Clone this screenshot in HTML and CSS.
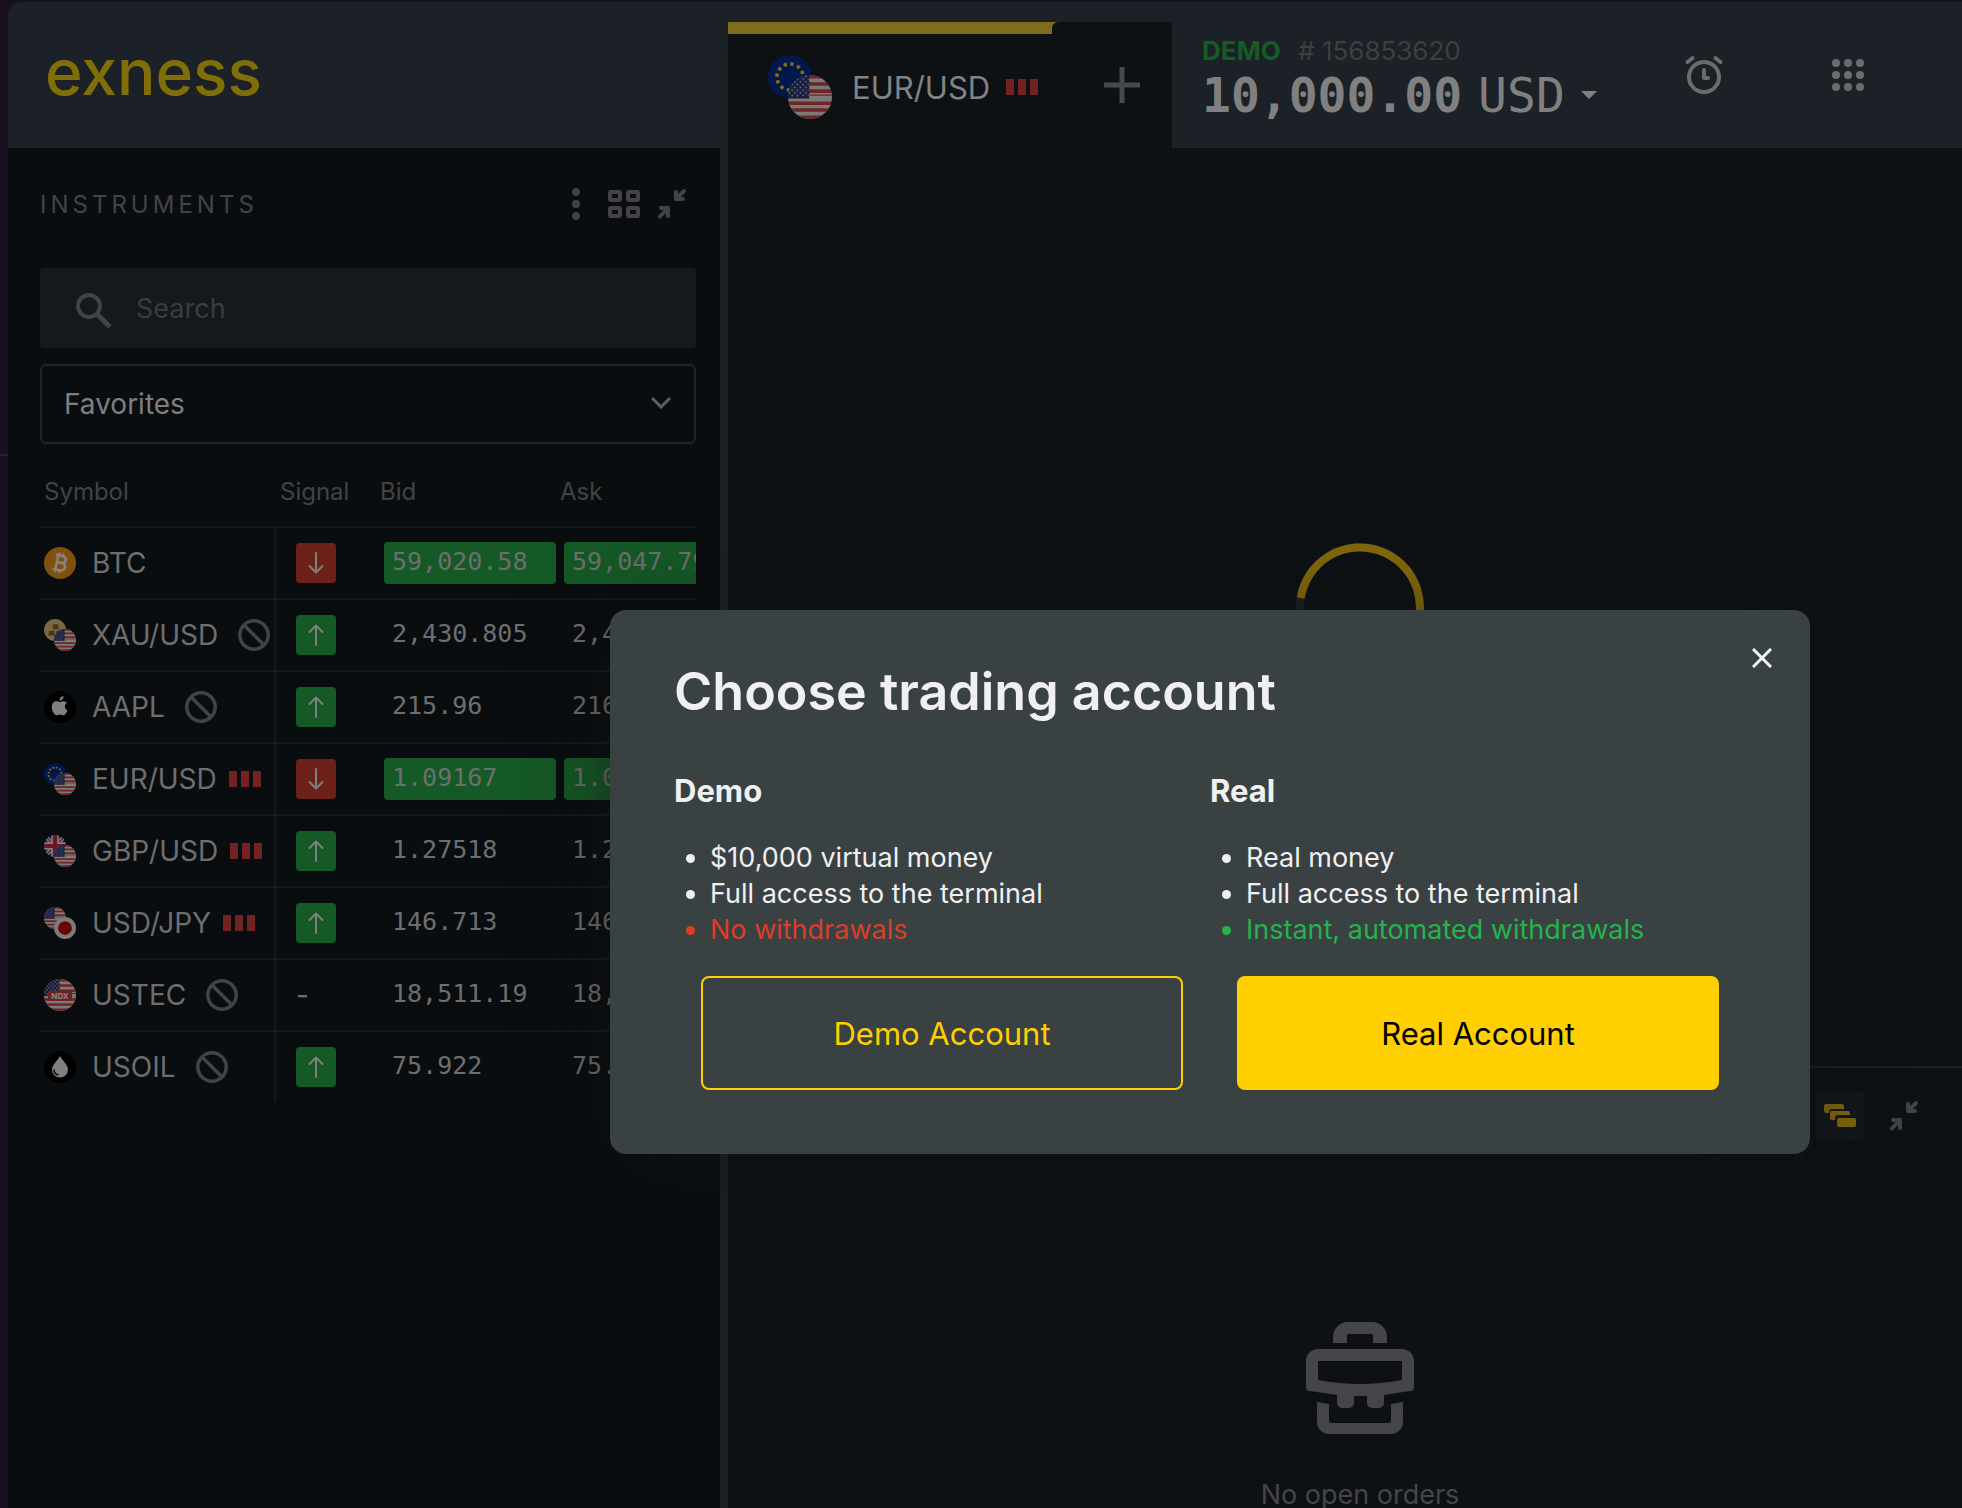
FILE: index.html
```html
<!DOCTYPE html>
<html lang="en">
<head>
    <meta charset="UTF-8">
    <meta name="viewport" content="width=device-width, initial-scale=1.0">
    <title>Exness Terminal</title>
    <link rel="stylesheet" href="styles.css">
</head>
<body>
    <!-- Shared icons -->
    <svg class="sprite" aria-hidden="true">
        <defs>
            <clipPath id="round"><circle cx="16" cy="16" r="16"/></clipPath>
            <pattern id="stars" width="4" height="4" patternUnits="userSpaceOnUse">
                <circle cx="1" cy="1" r=".7" fill="#75757c"/>
                <circle cx="3" cy="3" r=".7" fill="#75757c"/>
            </pattern>
        </defs>
        <symbol id="us" viewBox="0 0 32 32">
            <g clip-path="url(#round)">
                <path fill="#7d7976" d="M0 0h32v32H0z"/>
                <path stroke="#6e2527" stroke-width="2.6" d="M0 1.3h32M0 6.5h32M0 11.7h32M0 20.5h32M0 25.5h32M0 30.7h32"/>
                <path stroke="#6e2527" d="M16 14.6h16"/>
                <path fill="#141c3d" d="M0 0h15.500v17H0z"/>
                <path fill="url(#stars)" d="M0 0h15v16H0z"/>
            </g>
        </symbol>
        <symbol id="eu" viewBox="0 0 32 32">
            <circle cx="16" cy="16" r="16" fill="#02174d"/>
            <circle cx="16" cy="16" r="9.500" fill="none" stroke="#80700f" stroke-width="2.600" stroke-dasharray="2.400 2.574"/>
        </symbol>
        <symbol id="gb" viewBox="0 0 32 32">
            <g clip-path="url(#round)">
                <path fill="#0b1c4f" d="M0 0h32v32H0z"/>
                <path stroke="#7d7d80" stroke-width="6" d="M0 0l32 32M32 0L0 32"/>
                <path stroke="#6e1425" stroke-width="2" d="M0 0l32 32M32 0L0 32"/>
                <path stroke="#7d7d80" stroke-width="11" d="M16 0v32M0 16h32"/>
                <path stroke="#6e1425" stroke-width="6" d="M16 0v32M0 16h32"/>
            </g>
        </symbol>
        <symbol id="jp" viewBox="0 0 32 32">
            <circle cx="16" cy="16" r="16" fill="#7b7b7b"/>
            <circle cx="16" cy="16" r="10" fill="#6b0503"/>
        </symbol>
        <symbol id="gold" viewBox="0 0 32 32">
            <circle cx="16" cy="16" r="16" fill="#786844"/>
            <path fill="#4c3710" d="M13 7.500h7l2 7.500h-9zM8 17h7l1 7H6zM18 17h6l2 7h-8z"/>
        </symbol>
        <symbol id="pair-eurusd" viewBox="0 0 32 32">
            <use href="#eu" width="22" height="22"/>
            <use href="#us" x="10" y="10" width="22" height="22"/>
        </symbol>
        <symbol id="pair-gbpusd" viewBox="0 0 32 32">
            <use href="#gb" width="22" height="22"/>
            <use href="#us" x="10" y="10" width="22" height="22"/>
        </symbol>
        <symbol id="pair-usdjpy" viewBox="0 0 32 32">
            <use href="#us" width="22" height="22"/>
            <use href="#jp" x="10" y="10" width="22" height="22"/>
        </symbol>
        <symbol id="pair-xauusd" viewBox="0 0 32 32">
            <use href="#gold" width="22" height="22"/>
            <use href="#us" x="10" y="10" width="22" height="22"/>
        </symbol>
        <symbol id="btc" viewBox="0 0 32 32">
            <circle cx="16" cy="16" r="16" fill="#80500f"/>
            <g transform="rotate(13 16 16)" fill="none" stroke="#888280" stroke-width="2.600">
                <path d="M10 8.800h7.500a3.300 3.300 0 0 1 0 6.800h-4.500M10 23.200h8a3.700 3.700 0 0 0 0-7.600h-4M12.800 8.800v14.400"/>
                <path stroke-width="1.900" d="M13.500 5.800v3M17.300 5.800v3M13.500 23.200v3M17.300 23.200v3"/>
            </g>
        </symbol>
        <symbol id="aapl" viewBox="0 0 32 32">
            <circle cx="16" cy="16" r="16"/>
            <path fill="#808080" d="M19.500 5c.2 2.400-1.600 4.600-4 4.500C15.300 7.400 17.300 5.300 19.500 5zM15.800 11c.8 0 1.900-.9 3.600-.8 1.500 0 2.700.7 3.500 1.800-3 1.900-2.500 6 .6 7.300-.7 2-2.300 5-4.100 5-1.300 0-1.800-.8-3.400-.8s-2.100.8-3.300.8c-2.300 0-4.900-4.500-4.900-8.300 0-3.600 2.200-5.700 4.600-5.700 1.500 0 2.600.7 3.400.7z"/>
        </symbol>
        <symbol id="ndx" viewBox="0 0 32 32">
            <use href="#us" width="32" height="32"/>
            <rect x="4" y="11.500" width="24" height="10.500" rx="2" fill="#6b2328"/>
            <text x="16" y="19.800" class="ndx-text">NDX</text>
        </symbol>
        <symbol id="oil" viewBox="0 0 32 32">
            <circle cx="16" cy="16" r="16"/>
            <path fill="#808080" d="M16 5c2 4 8 9 8 13.500a8 8 0 0 1-16 0C8 14 14 9 16 5z"/>
            <path fill="none" stroke="#000" stroke-width="1.500" d="M10 18.500c0 3 2 5 4.500 5.500"/>
        </symbol>
        <symbol id="closed" viewBox="0 0 32 32">
            <g fill="none" stroke="#434347" stroke-width="3.500"><circle cx="16" cy="16" r="14.200"/><path d="M6 6l20 20"/></g>
        </symbol>
        <symbol id="bars" viewBox="0 0 32 16">
            <path fill="#732121" d="M0 0h8v16H0zM12 0h8v16h-8zM24 0h8v16h-8z"/>
        </symbol>
        <symbol id="down" viewBox="0 0 40 40">
            <path fill="none" stroke="#80807c" stroke-width="2" stroke-linecap="round" stroke-linejoin="round" d="M20 10v19M13.500 23l6.500 6.500 6.500-6.500"/>
        </symbol>
        <symbol id="up" viewBox="0 0 40 40">
            <path fill="none" stroke="#80807c" stroke-width="2" stroke-linecap="round" stroke-linejoin="round" d="M20 30V10.500M13.500 17l6.500-6.500 6.500 6.500"/>
        </symbol>
        <symbol id="minimize" viewBox="0 0 32 32">
            <path fill="none" stroke="#434347" stroke-width="4" stroke-linecap="round" stroke-linejoin="round" d="M20 4v7h7M21 10l7-7M5 20h7v8M11 21l-7 7.500"/>
        </symbol>
    </svg>

    <div class="app">
        <header class="header">
            <div class="brand">exness</div>
            <nav class="tabs">
                <button class="tab">
                    <svg class="tab-coin"><use href="#pair-eurusd"/></svg>
                    EUR/USD
                    <svg class="bars"><use href="#bars"/></svg>
                </button>
                <button class="tab-add" aria-label="Add tab">
                    <svg width="36" height="36" viewBox="0 0 36 36"><path stroke="#47494d" stroke-width="5" d="M18 0v36M0 18h36"/></svg>
                </button>
            </nav>
            <button class="account">
                <span class="account-top"><b>DEMO</b> # 156853620</span>
                <span class="account-balance">
                    <b>10,000.00</b>
                    <span>USD</span>
                    <svg width="16" height="8" viewBox="0 0 16 8"><path fill="#808080" d="M0 0h16L8 8z"/></svg>
                </span>
            </button>
            <div class="header-icons">
                <button aria-label="Alerts">
                    <svg width="40" height="40" viewBox="0 0 40 40" fill="none" stroke="#6a6c6d" stroke-width="4" stroke-linecap="round" stroke-linejoin="round"><circle cx="20" cy="22" r="15"/><path d="M20 15v8h4M3.500 7l5-4M36.500 7l-5-4"/></svg>
                </button>
                <button aria-label="Apps">
                    <svg width="32" height="32" viewBox="0 0 32 32" fill="#6a6c6d"><circle cx="4" cy="4" r="4"/><circle cx="16" cy="4" r="4"/><circle cx="28" cy="4" r="4"/><circle cx="4" cy="16" r="4"/><circle cx="16" cy="16" r="4"/><circle cx="28" cy="16" r="4"/><circle cx="4" cy="28" r="4"/><circle cx="16" cy="28" r="4"/><circle cx="28" cy="28" r="4"/></svg>
                </button>
            </div>
        </header>

        <main class="main">
            <aside class="sidebar">
                <div class="sidebar-head">
                    <h2>INSTRUMENTS</h2>
                    <button aria-label="More">
                        <svg width="8" height="32" viewBox="0 0 8 32" fill="#434347"><circle cx="4" cy="4" r="4"/><circle cx="4" cy="16" r="4"/><circle cx="4" cy="28" r="4"/></svg>
                    </button>
                    <button class="grid-btn" aria-label="Grid view">
                        <svg width="32" height="28" viewBox="0 0 32 28" fill="none" stroke="#434347" stroke-width="4"><rect x="2" y="2" width="10" height="8" rx="1"/><rect x="20" y="2" width="10" height="8" rx="1"/><rect x="2" y="18" width="10" height="8" rx="1"/><rect x="20" y="18" width="10" height="8" rx="1"/></svg>
                    </button>
                    <button aria-label="Minimize">
                        <svg width="32" height="32"><use href="#minimize"/></svg>
                    </button>
                </div>

                <label class="search">
                    <svg width="36" height="36" viewBox="0 0 36 36" fill="none" stroke="#434347" stroke-width="4"><circle cx="13" cy="13" r="11"/><path stroke-width="5" d="M21 21l13 13"/></svg>
                    <input type="text" placeholder="Search" aria-label="Search">
                </label>

                <div class="select">
                    <select aria-label="Instrument group">
                        <option>Favorites</option>
                    </select>
                    <svg width="20" height="12" viewBox="0 0 20 12"><path fill="none" stroke="#5c5e60" stroke-width="3" d="M1 1l9 9 9-9"/></svg>
                </div>

                <div class="table-wrap">
                    <table>
                        <thead>
                            <tr>
                                <th class="col-symbol">Symbol</th>
                                <th class="col-signal">Signal</th>
                                <th class="col-price">Bid</th>
                                <th class="col-price">Ask</th>
                            </tr>
                        </thead>
                        <tbody>
                            <tr>
                                <td><div class="symbol"><svg class="coin"><use href="#btc"/></svg>BTC</div></td>
                                <td><svg class="signal red"><use href="#down"/></svg></td>
                                <td><span class="price green">59,020.58</span></td>
                                <td><span class="price green">59,047.79</span></td>
                            </tr>
                            <tr>
                                <td><div class="symbol"><svg class="coin"><use href="#pair-xauusd"/></svg>XAU/USD<svg class="closed"><use href="#closed"/></svg></div></td>
                                <td><svg class="signal green"><use href="#up"/></svg></td>
                                <td><span class="price">2,430.805</span></td>
                                <td><span class="price">2,431.005</span></td>
                            </tr>
                            <tr>
                                <td><div class="symbol"><svg class="coin"><use href="#aapl"/></svg>AAPL<svg class="closed"><use href="#closed"/></svg></div></td>
                                <td><svg class="signal green"><use href="#up"/></svg></td>
                                <td><span class="price">215.96</span></td>
                                <td><span class="price">216.08</span></td>
                            </tr>
                            <tr>
                                <td><div class="symbol"><svg class="coin"><use href="#pair-eurusd"/></svg>EUR/USD<svg class="bars"><use href="#bars"/></svg></div></td>
                                <td><svg class="signal red"><use href="#down"/></svg></td>
                                <td><span class="price green">1.09167</span></td>
                                <td><span class="price green">1.09177</span></td>
                            </tr>
                            <tr>
                                <td><div class="symbol"><svg class="coin"><use href="#pair-gbpusd"/></svg>GBP/USD<svg class="bars"><use href="#bars"/></svg></div></td>
                                <td><svg class="signal green"><use href="#up"/></svg></td>
                                <td><span class="price">1.27518</span></td>
                                <td><span class="price">1.27530</span></td>
                            </tr>
                            <tr>
                                <td><div class="symbol"><svg class="coin"><use href="#pair-usdjpy"/></svg>USD/JPY<svg class="bars"><use href="#bars"/></svg></div></td>
                                <td><svg class="signal green"><use href="#up"/></svg></td>
                                <td><span class="price">146.713</span></td>
                                <td><span class="price">146.724</span></td>
                            </tr>
                            <tr>
                                <td><div class="symbol"><svg class="coin"><use href="#ndx"/></svg>USTEC<svg class="closed"><use href="#closed"/></svg></div></td>
                                <td><span class="no-signal">-</span></td>
                                <td><span class="price">18,511.19</span></td>
                                <td><span class="price">18,517.04</span></td>
                            </tr>
                            <tr>
                                <td><div class="symbol"><svg class="coin"><use href="#oil"/></svg>USOIL<svg class="closed"><use href="#closed"/></svg></div></td>
                                <td><svg class="signal green"><use href="#up"/></svg></td>
                                <td><span class="price">75.922</span></td>
                                <td><span class="price">75.941</span></td>
                            </tr>
                        </tbody>
                    </table>
                </div>
            </aside>

            <section class="content">
                <div class="chart">
                    <svg width="128" height="128" viewBox="0 0 128 128" fill="none" stroke-width="8">
                        <circle cx="64" cy="64" r="60" stroke="#1c1f21"/>
                        <path stroke="#80690b" d="M4.700 55A60 60 0 1 1 115 96"/>
                    </svg>
                </div>
                <div class="orders">
                    <div class="orders-tools">
                        <button class="group-btn" aria-label="Group orders">
                            <svg width="32" height="24" viewBox="0 0 32 24" fill="#80690b"><path d="M2 0h16a2 2 0 0 1 2 2v3H8a3 3 0 0 0-3 3v1H2a2 2 0 0 1-2-2V2a2 2 0 0 1 2-2z"/><path d="M9 7h15a2 2 0 0 1 2 2v2H14a3 3 0 0 0-3 3v2H8a2 2 0 0 1-2-2V9a2 2 0 0 1 3-2z"/><rect x="13" y="14" width="19" height="9" rx="2"/></svg>
                        </button>
                        <button aria-label="Minimize">
                            <svg width="32" height="32"><use href="#minimize"/></svg>
                        </button>
                    </div>
                    <div class="empty">
                        <svg width="108" height="112" viewBox="0 0 108 112" fill="#454549">
                            <path d="M27 21V15A15 15 0 0 1 42 0h24a15 15 0 0 1 15 15v6H67v-7a2 2 0 0 0-2-2H43a2 2 0 0 0-2 2v7z"/>
                            <path fill-rule="evenodd" d="M12 27h84a12 12 0 0 1 12 12v26a4 4 0 0 1-4 4l-26 4v8a5 5 0 0 1-5 5h-7a5 5 0 0 1-5-5v-7H48v7a5 5 0 0 1-5 5h-7a5 5 0 0 1-5-5v-8L4 69a4 4 0 0 1-4-4V39a12 12 0 0 1 12-12zM12 39v19q42 8 84 0V39z"/>
                            <path d="M11 80l12 2v17a2 2 0 0 0 2 2h58a2 2 0 0 0 2-2V82l12-2v20a12 12 0 0 1-12 12H23a12 12 0 0 1-12-12z"/>
                        </svg>
                        <p>No open orders</p>
                    </div>
                </div>
            </section>
        </main>
    </div>

    <div class="modal" role="dialog" aria-labelledby="modal-title">
        <button class="modal-close" aria-label="Close">
            <svg width="20" height="20" viewBox="0 0 20 20"><path stroke="#f3f4f5" stroke-width="3" d="M1 1l18 18M19 1L1 19"/></svg>
        </button>
        <h1 id="modal-title">Choose trading account</h1>
        <div class="plans">
            <div class="plan">
                <h3>Demo</h3>
                <ul>
                    <li>$10,000 virtual money</li>
                    <li>Full access to the terminal</li>
                    <li class="bad">No withdrawals</li>
                </ul>
                <button class="btn btn-outline">Demo Account</button>
            </div>
            <div class="plan">
                <h3>Real</h3>
                <ul>
                    <li>Real money</li>
                    <li>Full access to the terminal</li>
                    <li class="good">Instant, automated withdrawals</li>
                </ul>
                <button class="btn btn-fill">Real Account</button>
            </div>
        </div>
    </div>
</body>
</html>
```
FILE: styles.css
```css
* {
    box-sizing: border-box;
}
body {
    margin: 0;
    height: 100vh;
    padding: 2px 0 0 8px;
    overflow: hidden;
    font-family: Inter, "Liberation Sans", sans-serif;
    font-size: 28px;
    color: #6e6e6e;
    background: linear-gradient(#222426, #222426) 0 454px / 8px 2px no-repeat #19101f;
}
h1, h2, h3, p, ul {
    margin: 0;
}
button {
    padding: 0;
    border: 0;
    background: none;
    font: inherit;
    color: inherit;
    cursor: pointer;
}
svg {
    display: block;
    flex: none;
}
.sprite {
    position: absolute;
    width: 0;
    height: 0;
}
.ndx-text {
    font-size: 8px;
    font-weight: 700;
    fill: #8a8a8a;
    text-anchor: middle;
}
.app {
    display: flex;
    flex-direction: column;
    height: 100%;
    border-top-left-radius: 14px;
    overflow: hidden;
    background: #0d1114;
}

/* Header */
.header {
    display: flex;
    height: 146px;
    flex: none;
    background: #1c2027;
}
.brand {
    width: 720px;
    padding: 30px 0 0 37px;
    font-size: 64px;
    line-height: 80px;
    font-weight: 500;
    color: #806f09;
}
.tabs {
    display: flex;
    margin-top: 20px;
    background: linear-gradient(#806c1d, #806c1d) 0 0 / 330px 12px no-repeat #0d1114;
}
.tab {
    display: flex;
    align-items: center;
    width: 324px;
    padding: 4px 0 0 40px;
    font-size: 31px;
    color: #838383;
}
.tab-coin {
    width: 64px;
    height: 64px;
    margin-right: 20px;
}
.tab-add {
    display: flex;
    align-items: center;
    justify-content: center;
    width: 120px;
    padding-left: 20px;
    border-top-left-radius: 6px;
    background: #0d1114;
}
.account {
    display: flex;
    flex-direction: column;
    margin-left: 30px;
    padding-top: 33px;
    text-align: left;
}
.account-top {
    font-size: 26px;
    line-height: 32px;
    color: #3f3f40;
}
.account-top b {
    margin-right: 10px;
    color: #145b26;
}
.account-balance {
    display: flex;
    align-items: center;
    font-family: "DejaVu Sans Mono", monospace;
    font-size: 48px;
    line-height: 56px;
    color: #808080;
}
.account-balance span {
    margin: 0 16px;
}
.header-icons {
    display: flex;
    align-items: center;
    gap: 108px;
    margin: 0 98px 0 auto;
    height: 146px;
}

/* Instruments */
.main {
    display: flex;
    flex: 1;
    min-height: 0;
}
.sidebar {
    width: 720px;
    padding: 0 24px 0 32px;
    border-right: 8px solid #1c2027;
    background: #090d10;
    flex: none;
}
.sidebar-head {
    display: flex;
    align-items: center;
    height: 112px;
    margin-bottom: 8px;
    padding-right: 8px;
}
.sidebar-head h2 {
    flex: 1;
    font-size: 24px;
    font-weight: 400;
    letter-spacing: 4px;
    color: #434345;
}
.grid-btn {
    margin: 0 16px 0 28px;
}
.search {
    display: flex;
    align-items: center;
    height: 80px;
    padding-left: 36px;
    border-radius: 4px;
    background: #14191d;
}
.search svg {
    margin-top: 6px;
}
.search input {
    flex: 1;
    padding: 0 0 0 24px;
    border: 0;
    outline: 0;
    background: none;
    font: inherit;
    font-size: 27px;
    color: #7f7f7f;
}
.search input::placeholder {
    color: #3c3c3d;
    opacity: 1;
}
.select {
    position: relative;
    margin-top: 16px;
}
.select select {
    display: block;
    width: 100%;
    height: 80px;
    padding: 0 22px;
    border: 2px solid #222426;
    border-radius: 6px;
    appearance: none;
    background: none;
    font: inherit;
    color: #7f7f7f;
}
.select svg {
    position: absolute;
    top: 33px;
    right: 25px;
    pointer-events: none;
}
.table-wrap {
    overflow: hidden;
}
table {
    width: 700px;
    table-layout: fixed;
    border-collapse: separate;
    border-spacing: 0;
}
th {
    height: 82px;
    padding: 12px 0 0 4px;
    font-size: 24px;
    font-weight: 400;
    text-align: left;
    color: #434345;
}
.col-symbol {
    width: 236px;
}
.col-signal {
    width: 104px;
}
.col-price {
    padding-left: 0;
}
td {
    height: 72px;
    padding: 0 4px;
    border-top: 2px solid #14191c;
}
td:first-child {
    border-right: 2px solid #14191c;
}
td:nth-child(2) {
    padding-left: 20px;
}
.symbol {
    display: flex;
    align-items: center;
    white-space: nowrap;
}
.coin {
    width: 32px;
    height: 32px;
    margin-right: 16px;
}
.bars {
    width: 32px;
    height: 16px;
    margin-left: 12px;
}
.tab .bars {
    margin-left: 16px;
}
.closed {
    width: 32px;
    height: 32px;
    margin-left: 20px;
}
.signal {
    width: 40px;
    height: 40px;
    border-radius: 4px;
}
.red {
    background: #6c2018;
}
.green {
    background: #155926;
}
.price {
    display: block;
    height: 42px;
    padding-left: 8px;
    border-radius: 4px;
    font-family: "DejaVu Sans Mono", monospace;
    font-size: 25px;
    line-height: 40px;
}

/* Chart and orders */
.content {
    display: flex;
    flex-direction: column;
    flex: 1;
}
.chart {
    display: flex;
    align-items: center;
    justify-content: center;
    flex: 1;
    padding-left: 30px;
}
.orders {
    height: 442px;
    border-top: 2px solid #1c2027;
}
.orders-tools {
    display: flex;
    align-items: center;
    justify-content: flex-end;
    gap: 24px;
    padding: 24px 42px 0 0;
}
.group-btn {
    display: flex;
    align-items: center;
    justify-content: center;
    width: 48px;
    height: 48px;
    background: #12171c;
}
.empty {
    display: flex;
    flex-direction: column;
    align-items: center;
    gap: 44px;
    padding: 182px 0 0 30px;
    font-size: 27px;
    color: #454549;
}

/* Modal */
.modal {
    position: absolute;
    top: 610px;
    left: 610px;
    width: 1200px;
    padding: 48px 64px 64px;
    border-radius: 16px;
    background: #3a4143;
    box-shadow: 0 16px 90px rgba(20, 18, 20, .6);
    color: #f0f0f2;
}
.modal-close {
    position: absolute;
    top: 38px;
    right: 38px;
}
.modal h1 {
    font-size: 52px;
    line-height: 68px;
    font-weight: 600;
}
.modal h3 {
    font-size: 31px;
    line-height: 40px;
    font-weight: 700;
}
.plans {
    display: flex;
    margin-top: 45px;
}
.plan {
    flex: 1;
}
.plan ul {
    margin: 29px 0 28px;
    padding-left: 36px;
    font-size: 27px;
    line-height: 36px;
}
.bad {
    color: #db3e28;
}
.good {
    color: #27b24b;
}
.btn {
    display: block;
    width: 90%;
    height: 114px;
    margin: 0 auto;
    border: 2px solid #ffcf01;
    border-radius: 8px;
    font-size: 31px;
}
.btn-outline {
    color: #ffcf01;
}
.btn-fill {
    background: #ffcf01;
    color: #000;
}
```
